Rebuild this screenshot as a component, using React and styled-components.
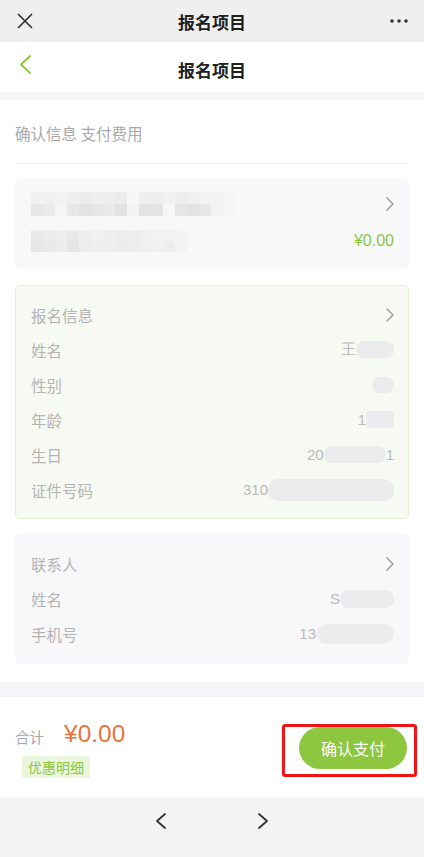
import React from "react";
import styled, { createGlobalStyle } from "styled-components";

const Global = createGlobalStyle`
  html, body { margin: 0; padding: 0; background: #fff; }
  body { font-family: "Noto Sans CJK SC", "Noto Sans", sans-serif; -webkit-font-smoothing: antialiased; }
  * { box-sizing: border-box; }
`;

const Page = styled.div`
  width: 424px;
  min-height: 857px;
  display: flex;
  flex-direction: column;
  background: #fff;
`;

const TopBar = styled.div`
  height: 42px;
  background: #efefef;
  display: grid;
  grid-template-columns: 50px 1fr 50px;
  align-items: center;
`;

const TopTitle = styled.div`
  text-align: center;
  font-size: 17px;
  font-weight: 600;
  color: #1f1f1f;
`;

const IconCell = styled.div`
  display: flex;
  align-items: center;
  justify-content: ${(p) => p.$justify || "center"};
  padding: ${(p) => p.$pad || "0"};
`;

const NavBar = styled.div`
  height: 50px;
  background: #fff;
  display: grid;
  grid-template-columns: 50px 1fr 50px;
  align-items: center;
`;

const NavTitle = styled.div`
  text-align: center;
  font-size: 17px;
  font-weight: 700;
  color: #222;
  padding-top: 4px;
`;

const Band = styled.div`
  height: ${(p) => p.$h}px;
  background: #f6f6f8;
`;

const Content = styled.div`
  padding: 0 15px 18px;
  display: flex;
  flex-direction: column;
`;

const Subtitle = styled.div`
  height: 64px;
  padding-top: 21px;
  line-height: 24px;
  font-size: 15.5px;
  color: #a9a9a9;
  border-bottom: 1px solid #efefef;
`;

const Card = styled.div`
  margin-top: ${(p) => p.$mt}px;
  background: ${(p) => (p.$green ? "#f7faf2" : "#f8f8fa")};
  border: 1px solid ${(p) => (p.$green ? "#e2efd2" : "#f8f8fa")};
  border-radius: 5px;
  padding: ${(p) => p.$pad || "11px 14px 11px 15px"};
  display: flex;
  flex-direction: column;
  gap: ${(p) => p.$gap || 0}px;
`;

const Row = styled.div`
  height: ${(p) => p.$h || 35}px;
  display: flex;
  align-items: center;
  justify-content: space-between;
`;

const Label = styled.span`
  font-size: 15.5px;
  color: #b4b4b4;
`;

const Value = styled.span`
  display: flex;
  align-items: center;
  font-family: "Liberation Sans", Arial, sans-serif;
  font-size: 15px;
  color: #b9b9b9;
`;

const Blur = styled.span`
  display: inline-block;
  width: ${(p) => p.$w}px;
  height: ${(p) => p.$hh || 17}px;
  background: #ececee;
  border-radius: ${(p) => p.$r ?? 8}px;
  filter: blur(0.6px);
`;

const Price = styled.span`
  font-family: "Liberation Sans", Arial, sans-serif;
  font-size: 16px;
  color: #8cc63f;
`;

const MosaicBox = styled.div`
  display: grid;
  grid-template-columns: repeat(${(p) => p.$cols}, 12px);
  grid-auto-rows: ${(p) => p.$rh}px;
`;

const Cell = styled.span`
  display: block;
`;

function Mosaic({ shades, cols, rh }) {
  return (
    <MosaicBox $cols={cols} $rh={rh}>
      {shades.map((s, i) => (
        <Cell key={i} style={{ background: s }} />
      ))}
    </MosaicBox>
  );
}

const m1 = [
  "#f1f1f3","#f0f0f2","#f2f2f4","#eeeef0","#ececee","#efeff1","#eeeef0","#ebebed","#f6f6f8","#efeff1","#eeeef0","#f1f1f3","#eeeef0","#f0f0f2","#f3f3f5","#f4f4f6","#f5f5f7",
  "#e7e7e9","#eaeaec","#f5f5f7","#e8e8ea","#e3e3e5","#e7e7e9","#eaeaec","#e2e2e4","#f4f4f6","#e4e4e6","#e4e4e6","#f6f6f8","#e6e6e8","#e3e3e5","#e7e7e9","#f3f3f5","#f6f6f8",
];
const m2 = [
  "#eaeaec","#ececee","#eeeef0","#e9e9eb","#eeeef0","#f1f1f3","#efeff1","#ecedef","#eeeef0","#f0f0f2","#f2f2f4","#f3f3f5","#f4f4f6",
  "#e6e6e8","#e9e9eb","#ececee","#e5e5e7","#ededef","#efeff1","#eeeef0","#ececee","#ededef","#efeff1","#f1f1f3","#eeeef0","#f4f4f6",
];

const FooterBar = styled.div`
  height: 100px;
  background: #fff;
  display: flex;
  justify-content: space-between;
  padding: 0 7px 0 15px;
`;

const TotalCol = styled.div`
  display: flex;
  flex-direction: column;
  padding-top: 20px;
`;

const TotalLine = styled.div`
  display: flex;
  align-items: center;
  gap: 20px;
  height: 34px;
`;

const TotalLabel = styled.span`
  font-size: 14.5px;
  color: #a9a9a9;
  padding-top: 5px;
`;

const TotalPrice = styled.span`
  font-family: "Liberation Sans", Arial, sans-serif;
  font-size: 24.5px;
  color: #e8733c;
`;

const Tag = styled.span`
  align-self: flex-start;
  margin: 5px 0 0 7px;
  padding: 0 6px;
  height: 22px;
  line-height: 22px;
  font-size: 14px;
  color: #8cc63f;
  background: #eaf6de;
  border-radius: 2px;
`;

const Highlight = styled.div`
  margin-top: 27px;
  align-self: flex-start;
  border: 3px solid #f01414;
  border-radius: 3px;
  padding: 0 7px 5px 14px;
`;

const PayButton = styled.button`
  width: 108px;
  height: 42px;
  border: none;
  border-radius: 21px;
  background: #8dc63f;
  color: #fff;
  font-family: "Noto Sans CJK SC", sans-serif;
  font-size: 16px;
  padding: 0;
`;

const BottomBar = styled.div`
  flex: 1;
  min-height: 62px;
  background: #f4f4f4;
  display: flex;
  justify-content: center;
  gap: 92px;
  padding-top: 16px;
`;

const Chevron = ({ dir = "right", color = "#999", w = 8, h = 14, sw = 1.4 }) => (
  <svg width={w} height={h} viewBox={`0 0 ${w} ${h}`} fill="none">
    {dir === "right" ? (
      <polyline points={`1,1 ${w - 1},${h / 2} 1,${h - 1}`} stroke={color} strokeWidth={sw} strokeLinecap="round" strokeLinejoin="round" />
    ) : (
      <polyline points={`${w - 1},1 1,${h / 2} ${w - 1},${h - 1}`} stroke={color} strokeWidth={sw} strokeLinecap="round" strokeLinejoin="round" />
    )}
  </svg>
);

export default function App() {
  return (
    <Page>
      <Global />
      <TopBar>
        <IconCell>
          <svg width="16" height="16" viewBox="0 0 16 16">
            <path d="M1.5 1.5 L14.5 14.5 M14.5 1.5 L1.5 14.5" stroke="#333" strokeWidth="1.7" strokeLinecap="round" />
          </svg>
        </IconCell>
        <TopTitle>报名项目</TopTitle>
        <IconCell>
          <svg width="18" height="4" viewBox="0 0 18 4">
            <circle cx="2" cy="2" r="1.8" fill="#333" />
            <circle cx="9" cy="2" r="1.8" fill="#333" />
            <circle cx="16" cy="2" r="1.8" fill="#333" />
          </svg>
        </IconCell>
      </TopBar>
      <NavBar>
        <IconCell $justify="flex-start" $pad="0 0 6px 20px">
          <Chevron dir="left" color="#8cc63f" w={11} h={19} sw={1.8} />
        </IconCell>
        <NavTitle>报名项目</NavTitle>
        <div />
      </NavBar>
      <Band $h={8} />
      <Content>
        <Subtitle>确认信息 支付费用</Subtitle>
        <Card $mt={14} $pad="13px 14px 15px 15px" $gap={13}>
          <Row $h={24}>
            <Mosaic shades={m1} cols={17} rh={12} />
            <Chevron />
          </Row>
          <Row $h={24}>
            <Mosaic shades={m2} cols={13} rh={11} />
            <Price>¥0.00</Price>
          </Row>
        </Card>
        <Card $mt={16} $green $pad="11px 14px 11px 15px">
          <Row>
            <Label>报名信息</Label>
            <Chevron />
          </Row>
          <Row>
            <Label>姓名</Label>
            <Value>王<Blur $w={38} /></Value>
          </Row>
          <Row>
            <Label>性别</Label>
            <Value><Blur $w={22} $hh={16} /></Value>
          </Row>
          <Row>
            <Label>年龄</Label>
            <Value>1<Blur $w={28} $r={4} /></Value>
          </Row>
          <Row>
            <Label>生日</Label>
            <Value>20<Blur $w={62} />1</Value>
          </Row>
          <Row>
            <Label>证件号码</Label>
            <Value>310<Blur $w={126} $hh={22} $r={10} /></Value>
          </Row>
        </Card>
        <Card $mt={14} $pad="12px 14px 12px 15px">
          <Row>
            <Label>联系人</Label>
            <Chevron />
          </Row>
          <Row>
            <Label>姓名</Label>
            <Value>S<Blur $w={54} $hh={18} /></Value>
          </Row>
          <Row>
            <Label>手机号</Label>
            <Value>13<Blur $w={78} $hh={20} $r={10} /></Value>
          </Row>
        </Card>
      </Content>
      <Band $h={15} />
      <FooterBar>
        <TotalCol>
          <TotalLine>
            <TotalLabel>合计</TotalLabel>
            <TotalPrice>¥0.00</TotalPrice>
          </TotalLine>
          <Tag>优惠明细</Tag>
        </TotalCol>
        <Highlight>
          <PayButton>确认支付</PayButton>
        </Highlight>
      </FooterBar>
      <BottomBar>
        <Chevron dir="left" color="#333" w={10} h={16} sw={1.8} />
        <Chevron dir="right" color="#333" w={10} h={16} sw={1.8} />
      </BottomBar>
    </Page>
  );
}
